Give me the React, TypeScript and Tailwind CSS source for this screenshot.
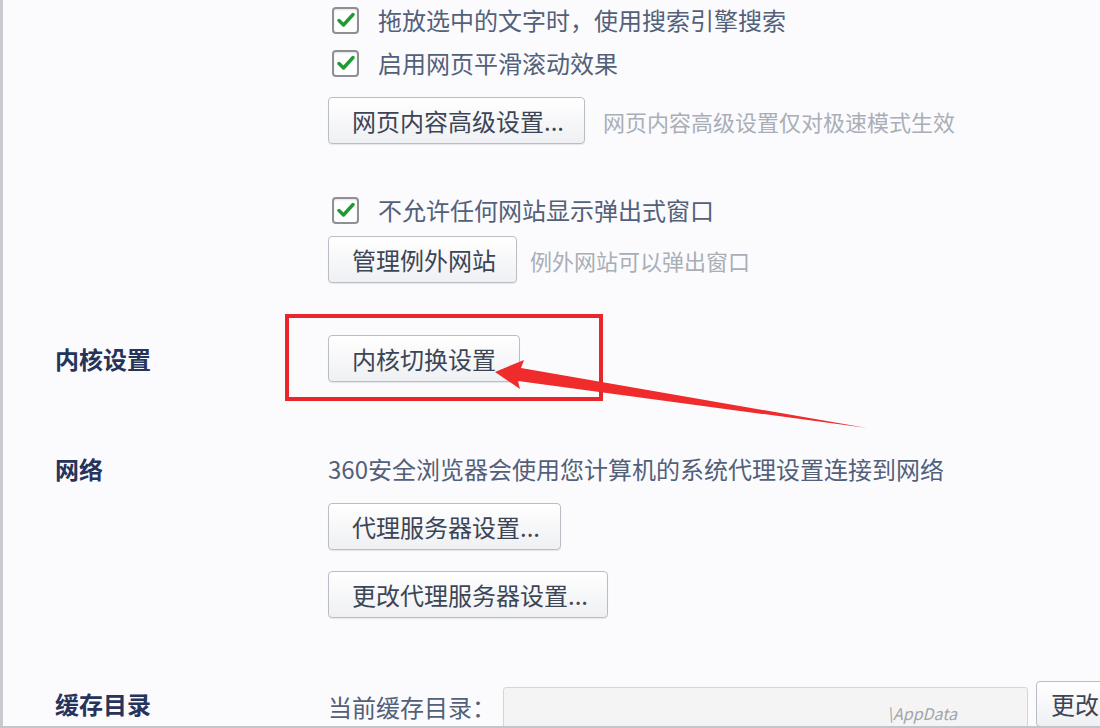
import React from "react";

const font = { fontFamily: '"Noto Sans CJK SC", "Noto Sans", sans-serif' };

function Check({ children }: { children: React.ReactNode }) {
  return (
    <div className="flex h-[40px] items-center">
      <div className="ml-[4px] flex h-[27px] w-[27px] items-center justify-center rounded-[4px] border-2 border-[#8e9096] bg-white shadow-[inset_0_1px_2px_rgba(0,0,0,0.12)]">
        <svg width="18" height="16" viewBox="0 0 18 16">
          <path d="M2 8.5 L6.5 13 L16 2.5" fill="none" stroke="#1e9b32" strokeWidth="3.4" strokeLinecap="round" strokeLinejoin="round" />
        </svg>
      </div>
      <span className="ml-[19px] text-[24px] leading-none text-[#53607a]">{children}</span>
    </div>
  );
}

function Btn({ w, children, className = "" }: { w: string; children: React.ReactNode; className?: string }) {
  return (
    <div
      className={`flex h-[47px] items-center rounded-[4px] border border-[#b9bdc5] bg-gradient-to-b from-white to-[#eff0f3] pl-[23px] text-[24px] leading-none text-[#3c4556] shadow-[0_1px_1px_rgba(0,0,0,0.08)] ${w} ${className}`}
    >
      {children}
    </div>
  );
}

function Hint({ children, className = "" }: { children: React.ReactNode; className?: string }) {
  return <span className={`text-[22px] leading-none text-[#a9aeb7] ${className}`}>{children}</span>;
}

function Label({ children }: { children: React.ReactNode }) {
  return <div className="w-[273px] shrink-0 text-[24px] font-bold leading-none text-[#26335a]">{children}</div>;
}

export default function App() {
  return (
    <div className="relative h-[728px] w-[1100px] overflow-hidden bg-[#fbfbfd]" style={font}>
      <div className="flex h-full">
        <div className="w-[3px] shrink-0 bg-[#c9cacf]" />
        <div className="flex flex-1 flex-col pl-[52px]">
          {/* top block */}
          <div className="flex">
            <div className="w-[273px] shrink-0" />
            <div className="flex flex-col">
              <Check>拖放选中的文字时，使用搜索引擎搜索</Check>
              <div className="mt-[3px]">
                <Check>启用网页平滑滚动效果</Check>
              </div>
              <div className="mt-[14px] flex items-center">
                <Btn w="w-[257px]">网页内容高级设置...</Btn>
                <Hint className="ml-[18px]">网页内容高级设置仅对极速模式生效</Hint>
              </div>
              <div className="mt-[46px]">
                <Check>不允许任何网站显示弹出式窗口</Check>
              </div>
              <div className="mt-[6px] flex items-center">
                <Btn w="w-[189px]">管理例外网站</Btn>
                <Hint className="ml-[13px]">例外网站可以弹出窗口</Hint>
              </div>
            </div>
          </div>

          {/* kernel */}
          <div className="mt-[52px] flex items-center">
            <Label>内核设置</Label>
            <Btn w="w-[192px]">内核切换设置</Btn>
          </div>

          {/* network */}
          <div className="mt-[73px] flex items-center">
            <Label>网络</Label>
            <span className="text-[24px] leading-[28px] text-[#53607a]">360安全浏览器会使用您计算机的系统代理设置连接到网络</span>
          </div>
          <div className="flex">
            <div className="w-[273px] shrink-0" />
            <div className="flex flex-col">
              <Btn w="w-[233px]" className="mt-[20px]">代理服务器设置...</Btn>
              <Btn w="w-[280px]" className="mt-[21px]">更改代理服务器设置...</Btn>
            </div>
          </div>

          {/* cache */}
          <div className="mt-[63px] flex h-[46px] items-center">
            <Label>缓存目录</Label>
            <span className="shrink-0 pt-[6px] text-[24px] leading-none text-[#53607a]">当前缓存目录：</span>
            <div className="ml-[7px] mt-[8px] flex h-[42px] w-[525px] shrink-0 items-center justify-end overflow-hidden rounded-[3px] border border-[#d4d5d9] bg-[#f4f4f5] pr-[70px]">
              <span className="pt-[10px] text-[16px] italic leading-none text-[#a2a4aa]">\AppData</span>
            </div>
            <div className="ml-[8px] flex h-[46px] w-[80px] shrink-0 items-center rounded-[4px] border border-[#b9bdc5] bg-gradient-to-b from-white to-[#eff0f3] pl-[14px] text-[24px] leading-none text-[#3c4556]">
              更改
            </div>
          </div>
        </div>
      </div>
      <div className="pointer-events-none absolute bottom-0 left-0 h-[2px] w-full bg-[#c4c5ca]" />

      {/* annotation overlay */}
      <svg className="pointer-events-none absolute left-0 top-0" width="1100" height="728" viewBox="0 0 1100 728">
        <rect x="287" y="316" width="314" height="83" fill="none" stroke="#e8262b" strokeWidth="4" />
        <polygon points="495,372 524,360 521,368 867,428 518,381 520,389" fill="#ef2b2b" />
      </svg>
    </div>
  );
}
